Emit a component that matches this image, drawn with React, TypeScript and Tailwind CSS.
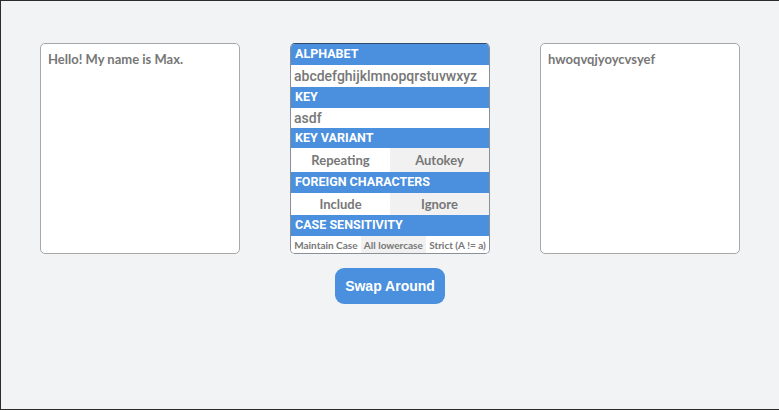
import React, { useState } from 'react';

const Header = ({ children, h = 'h-[21px]' }: { children: React.ReactNode; h?: string }) => (
  <div className={`${h} bg-[#4a90de] px-[4px] flex items-center text-[12.5px] font-bold text-white font-['Roboto',sans-serif] leading-none`}>
    {children}
  </div>
);

interface ToggleProps {
  options: string[];
  active: number;
  height: string;
  onPick: (i: number) => void;
}

const Toggle: React.FC<ToggleProps> = ({ options, active, height, onPick }) => (
  <div className={`flex ${height}`}>
    {options.map((o, i) => (
      <button
        key={o}
        onClick={() => onPick(i)}
        className={`flex-1 flex items-center justify-center pt-[1px] text-[13px] font-bold text-[#777] font-['Lato',sans-serif] leading-none ${
          i === active ? 'bg-white' : 'bg-[#f1f1f1]'
        }`}
      >
        {o}
      </button>
    ))}
  </div>
);

export default function App() {
  const [variant, setVariant] = useState(0);
  const [foreign, setForeign] = useState(0);
  const [caseMode, setCaseMode] = useState(0);

  return (
    <div className="w-[779px] h-[410px] bg-[#f2f3f5] border-l border-t border-b border-[#2b2b2b] flex flex-col items-center">
      <div className="flex gap-[50px] mt-[42px]">
        {/* input */}
        <div className="w-[200px] h-[211px] bg-white border border-[#a8a8a8] rounded-[5px] px-[7px] py-[6px] text-[13px] font-bold text-[#777] font-['Lato',sans-serif] leading-[18px]">
          Hello! My name is Max.
        </div>

        {/* settings */}
        <div className="w-[200px] h-[211px] bg-white border border-[#8a8f99] border-t-[#2e4c70] rounded-[5px] overflow-hidden flex flex-col">
          <Header>ALPHABET</Header>
          <div className="h-[22px] px-[3px] flex items-center text-[14px] font-medium text-[#777] font-['Roboto',sans-serif]">
            abcdefghijklmnopqrstuvwxyz
          </div>
          <Header>KEY</Header>
          <div className="h-[20px] px-[3px] flex items-center text-[14px] font-medium text-[#777] font-['Roboto',sans-serif]">
            asdf
          </div>
          <Header h="h-[20px]">KEY VARIANT</Header>
          <Toggle options={['Repeating', 'Autokey']} active={variant} height="h-[24px]" onPick={setVariant} />
          <Header>FOREIGN CHARACTERS</Header>
          <Toggle options={['Include', 'Ignore']} active={foreign} height="h-[22px]" onPick={setForeign} />
          <Header>CASE SENSITIVITY</Header>
          <div className="flex flex-1 text-[10px] font-bold text-[#777] font-['Lato',sans-serif] leading-none">
            {['Maintain Case', 'All lowercase', 'Strict (A != a)'].map((o, i) => (
              <button
                key={o}
                onClick={() => setCaseMode(i)}
                className={`px-[2px] flex-auto flex items-center justify-center ${i === 1 ? 'bg-[#f1f1f1]' : 'bg-white'} ${i === caseMode ? 'text-[#777]' : 'text-[#777]'}`}
              >
                {o}
              </button>
            ))}
          </div>
        </div>

        {/* output */}
        <div className="w-[200px] h-[211px] bg-white border border-[#a8a8a8] rounded-[5px] px-[7px] py-[6px] text-[13px] font-bold text-[#777] font-['Lato',sans-serif] leading-[18px]">
          hwoqvqjyoycvsyef
        </div>
      </div>

      <button className="mt-[14px] w-[110px] h-[36px] rounded-[9px] bg-[#4a90de] text-white text-[14px] font-bold font-['Liberation_Sans',Arial,sans-serif]">
        Swap Around
      </button>
    </div>
  );
}
